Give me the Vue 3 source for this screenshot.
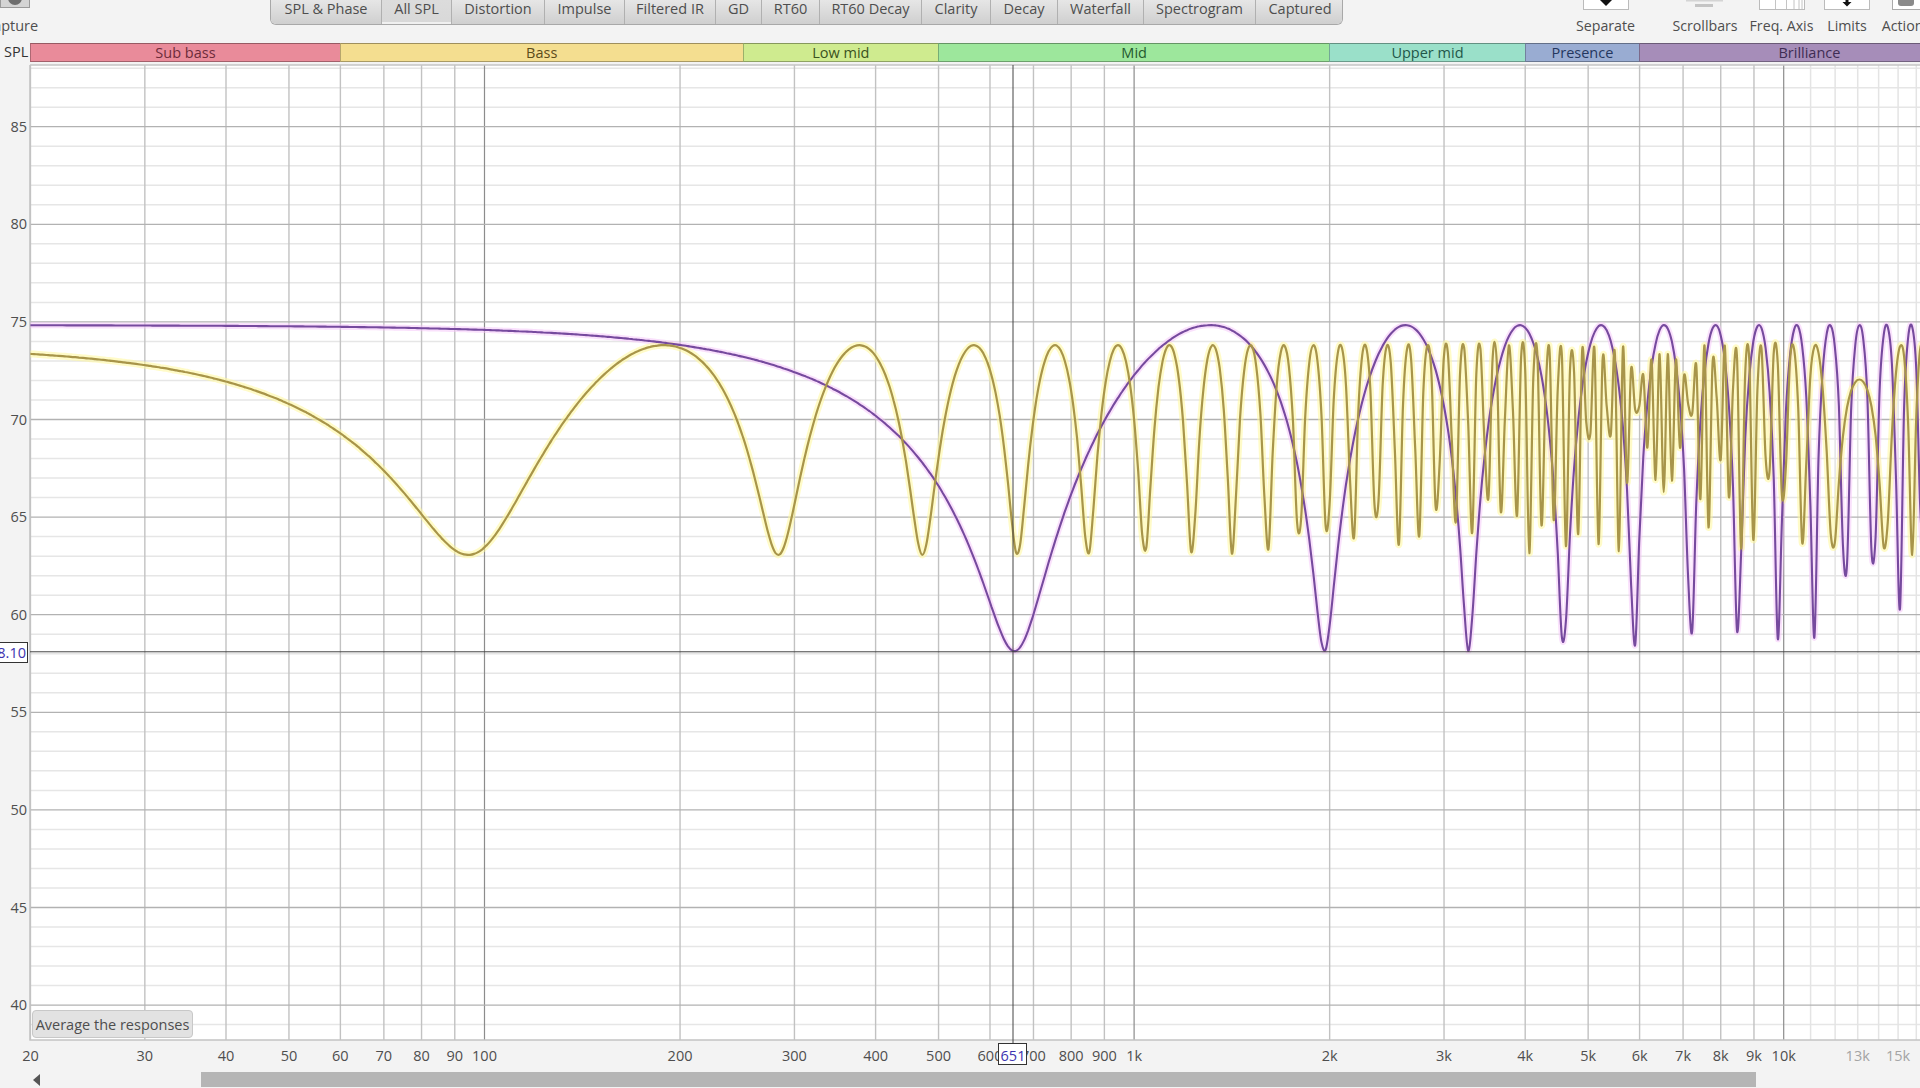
<script setup>
import { computed } from 'vue';

const tabs = ['SPL & Phase', 'All SPL', 'Distortion', 'Impulse', 'Filtered IR', 'GD', 'RT60', 'RT60 Decay', 'Clarity', 'Decay', 'Waterfall', 'Spectrogram', 'Captured'];

const plot = { left: 30, right: 1920, top: 65, bottom: 1040 };

// axis mapping measured from the gridlines
const xOf = (f) => 484.5 + 649.6 * Math.log10(f / 100);
const yOf = (db) => 126.7 + (85 - db) * 19.52;

const bands = [
  { name: 'Sub bass', from: 20, to: 60, bg: '#e98b9a', fg: '#6e2c3a' },
  { name: 'Bass', from: 60, to: 250, bg: '#f4de90', fg: '#5c4c1a' },
  { name: 'Low mid', from: 250, to: 500, bg: '#cfeb8f', fg: '#3a5220' },
  { name: 'Mid', from: 500, to: 2000, bg: '#9de79c', fg: '#245a2e' },
  { name: 'Upper mid', from: 2000, to: 4000, bg: '#9ae0c9', fg: '#22574a' },
  { name: 'Presence', from: 4000, to: 6000, bg: '#99acd2', fg: '#24375f' },
  { name: 'Brilliance', from: 6000, to: 20000, bg: '#a68db9', fg: '#3f2c54' }
];

const bandStyle = (b) => ({
  width: (xOf(b.to) - xOf(b.from)) + 'px',
  background: b.bg,
  color: b.fg
});

const xGrid = [];
[10, 100, 1000].forEach((d) => {
  for (let i = d === 10 ? 2 : 1; i < 10; i++) xGrid.push({ f: i * d, major: i === 1 });
});
xGrid.push({ f: 10000, major: true });
const fineX = [11000, 12000, 13000, 14000, 15000, 16000];

const xLabels = [
  [20, '20'], [30, '30'], [40, '40'], [50, '50'], [60, '60'], [70, '70'], [80, '80'], [90, '90'], [100, '100'],
  [200, '200'], [300, '300'], [400, '400'], [500, '500'], [600, '600'], [700, '700'], [800, '800'], [900, '900'], [1000, '1k'],
  [2000, '2k'], [3000, '3k'], [4000, '4k'], [5000, '5k'], [6000, '6k'], [7000, '7k'], [8000, '8k'], [9000, '9k'], [10000, '10k']
];

const yMajor = [85, 80, 75, 70, 65, 60, 55, 50, 45, 40];
const yMinor = [];
for (let db = 88; db >= 39; db--) {
  if (db % 5 !== 0) yMinor.push(db);
}

// comb filter response, sampled at 48 points per octave from 1 kHz like the measurement
const comb = (f, a, nullAt) => 70 + 10 * Math.log10(1 + a * a + 2 * a * Math.cos(Math.PI * f / nullAt));

function curvePath(a, nullAt) {
  const pts = [];
  const step = Math.pow(2, 1 / 48);
  let f = 1000;
  while (f > 20) f /= step;
  for (; f < 21000; f *= step) {
    const ff = Math.max(f, 20);
    pts.push([xOf(ff), yOf(comb(ff, a, nullAt))]);
  }
  let d = `M${pts[0][0].toFixed(1)} ${pts[0][1].toFixed(1)}`;
  for (let i = 0; i < pts.length - 1; i++) {
    const p0 = pts[Math.max(i - 1, 0)];
    const p1 = pts[i];
    const p2 = pts[i + 1];
    const p3 = pts[Math.min(i + 2, pts.length - 1)];
    const c1x = p1[0] + (p2[0] - p0[0]) / 6;
    const c1y = p1[1] + (p2[1] - p0[1]) / 6;
    const c2x = p2[0] - (p3[0] - p1[0]) / 6;
    const c2y = p2[1] - (p3[1] - p1[1]) / 6;
    d += `C${c1x.toFixed(1)} ${c1y.toFixed(1)} ${c2x.toFixed(1)} ${c2y.toFixed(1)} ${p2[0].toFixed(1)} ${p2[1].toFixed(1)}`;
  }
  return d;
}

const yellowPath = computed(() => curvePath(0.55, 94.438));
const purplePath = computed(() => curvePath(0.745, 654.45));

const framePath = `M${plot.left} ${plot.top}V${plot.bottom}H${plot.right}`;
const cursorX = xOf(651);
const cursorY = yOf(58.1);
</script>

<template>
  <div class="app">
    <header class="top">
      <div class="capture">
        <div class="capture-btn"><span class="capture-dot"></span></div>
        <span class="capture-label">Capture</span>
      </div>

      <nav class="tabs">
        <button v-for="t in tabs" :key="t" class="tab" :class="{ active: t === 'All SPL' }">{{ t }}</button>
      </nav>

      <div class="tools">
        <div class="tool">
          <svg class="tool-icon" width="46" height="10" viewBox="0 0 46 10">
            <rect x="0.5" y="-3" width="45" height="12.5" fill="#fff" stroke="#bbb" />
            <path d="M17 0h12l-6 6z" fill="#111" />
          </svg>
          <span>Separate</span>
        </div>
        <div class="tool">
          <svg class="tool-icon" width="46" height="10" viewBox="0 0 46 10">
            <rect x="4" y="0" width="37" height="1.5" fill="#d4d4d4" />
            <rect x="13" y="4" width="18" height="3" fill="#c4c4c4" />
          </svg>
          <span>Scrollbars</span>
        </div>
        <div class="tool">
          <svg class="tool-icon" width="46" height="10" viewBox="0 0 46 10">
            <rect x="0.5" y="-3" width="45" height="12.5" fill="#fff" stroke="#bbb" />
            <path d="M16.5 0v9M27.5 0v9M35 0v9M40 0v9M43 0v9" stroke="#c4c4c4" fill="none" />
          </svg>
          <span>Freq. Axis</span>
        </div>
        <div class="tool">
          <svg class="tool-icon" width="46" height="10" viewBox="0 0 46 10">
            <rect x="0.5" y="-3" width="45" height="12.5" fill="#fff" stroke="#bbb" />
            <path d="M21.5 0h3v2h3l-4.500 4.500L18.500 2h3z" fill="#111" />
          </svg>
          <span>Limits</span>
        </div>
        <div class="tool">
          <svg class="tool-icon" width="46" height="10" viewBox="0 0 46 10">
            <rect x="0.5" y="-3" width="45" height="12.5" fill="#fff" stroke="#aaa" />
            <rect x="6" y="-4" width="16" height="10" rx="3" fill="#8a8a8a" />
          </svg>
          <span>Actions</span>
        </div>
      </div>
    </header>

    <div class="band-row">
      <div class="spl">SPL</div>
      <div class="bands">
        <div v-for="b in bands" :key="b.name" class="band" :style="bandStyle(b)">{{ b.name }}</div>
      </div>
    </div>

    <div class="chart">
      <svg class="graph" width="1920" height="1006" viewBox="0 62 1920 1006">
        <rect :x="plot.left" :y="plot.top" :width="plot.right - plot.left" :height="plot.bottom - plot.top" fill="#fff" />

        <line v-for="db in yMinor" :key="'m' + db" :x1="plot.left" :x2="plot.right" :y1="yOf(db)" :y2="yOf(db)" class="h-minor" />
        <line v-for="f in fineX" :key="'fx' + f" :x1="xOf(f)" :x2="xOf(f)" :y1="plot.top" :y2="plot.bottom" class="v-fine" />
        <line v-for="g in xGrid" :key="'g' + g.f" :x1="xOf(g.f)" :x2="xOf(g.f)" :y1="plot.top" :y2="plot.bottom" :class="g.major ? 'v-major' : 'v-minor'" />
        <line v-for="db in yMajor" :key="'j' + db" :x1="plot.left" :x2="plot.right" :y1="yOf(db)" :y2="yOf(db)" class="h-major" />

        <path :d="framePath" class="frame" />
        <line :x1="plot.left" :x2="plot.right" :y1="plot.top" :y2="plot.top" class="frame" />

        <clipPath id="plot-clip">
          <rect :x="plot.left" :y="plot.top" :width="plot.right - plot.left" :height="plot.bottom - plot.top" />
        </clipPath>
        <g clip-path="url(#plot-clip)">
          <path :d="purplePath" class="halo-purple" />
          <path :d="yellowPath" class="halo-yellow" />
          <path :d="purplePath" class="curve-purple" />
          <path :d="yellowPath" class="curve-yellow" />
        </g>

        <line :x1="cursorX" :x2="cursorX" :y1="plot.top" y2="1043" class="cursor" />
        <line :x1="plot.left" :x2="plot.right" :y1="cursorY" :y2="cursorY" class="cursor" />

        <text v-for="db in yMajor" :key="'yl' + db" x="27" :y="yOf(db) + 5" class="axis" text-anchor="end">{{ db }}</text>
        <text v-for="l in xLabels" :key="'xl' + l[0]" :x="xOf(l[0])" y="1061" class="axis" text-anchor="middle">{{ l[1] }}</text>
        <text :x="xOf(13000)" y="1061" class="axis faint" text-anchor="middle">13k</text>
        <text :x="xOf(15000)" y="1061" class="axis faint" text-anchor="middle">15k</text>

        <rect x="998.5" y="1043.5" width="28" height="21" fill="#fff" stroke="#333" />
        <text :x="cursorX" y="1061" class="axis readout" text-anchor="middle">651</text>
        <rect x="-10" y="642.5" width="37.5" height="20" fill="#fff" stroke="#333" />
        <text x="26" y="657.5" class="axis readout" text-anchor="end">58.10</text>
      </svg>

      <button class="average">Average the responses</button>
    </div>

    <div class="scrollbar">
      <svg class="arrow" width="8" height="12" viewBox="0 0 8 12"><path d="M7 0v12L0 6z" fill="#555" /></svg>
      <div class="thumb"></div>
    </div>
  </div>
</template>

<style scoped>
.app {
  width: 1920px;
  height: 1088px;
  overflow: hidden;
  background: #f3f3f3;
  font-family: "Open Sans", "Noto Sans", sans-serif;
  display: flex;
  flex-direction: column;
}

.top {
  height: 43px;
  flex: none;
  display: flex;
  align-items: flex-start;
}

.capture {
  width: 270px;
  flex: none;
}

.capture-btn {
  width: 28px;
  height: 7px;
  background: #d4d4d4;
  border: 1px solid #9a9a9a;
  border-top: none;
  display: flex;
  justify-content: center;
  overflow: hidden;
}

.capture-dot {
  width: 14px;
  height: 14px;
  border-radius: 50%;
  background: #6e6e6e;
  margin-top: -9px;
}

.capture-label {
  display: block;
  margin: 9px 0 0 -16px;
  font-size: 14.5px;
  line-height: 18px;
  color: #4e4e4e;
}

.tabs {
  width: 1073px;
  height: 25px;
  flex: none;
  display: grid;
  grid-template-columns: 111px 70px 93px 80px 91px 46px 58px 102px 69px 67px 86px 112px 88px;
  border: 1px solid #a8a8a8;
  border-top: none;
  border-radius: 0 0 6px 6px;
  overflow: hidden;
  box-sizing: border-box;
}

.tab {
  border: none;
  border-right: 1px solid #b0b0b0;
  padding: 0 0 6px;
  background: linear-gradient(#e6e6e6, #cfcfcf);
  font-family: inherit;
  font-size: 14.5px;
  line-height: 18px;
  color: #4e4e4e;
  white-space: nowrap;
}

.tab:last-child {
  border-right: none;
}

.tab.active {
  background: linear-gradient(#dcdcdc, #d8d8d8);
  box-shadow: inset 0 -2px 0 #f0f0f0;
}

.tools {
  margin-left: 213px;
  flex: none;
  display: grid;
  grid-template-columns: 99px 100px 53px 78px 40px;
}

.tool {
  display: flex;
  flex-direction: column;
  align-items: center;
  font-size: 14.2px;
  line-height: 18px;
  color: #4e4e4e;
  white-space: nowrap;
}

.tool-icon {
  display: block;
  margin-bottom: 7px;
}

.tool:last-child .tool-icon {
  margin-left: 18px;
}

.band-row {
  height: 19px;
  flex: none;
  display: flex;
}

.spl {
  width: 30px;
  flex: none;
  padding-left: 4px;
  box-sizing: border-box;
  font-size: 14.5px;
  line-height: 18px;
  color: #333;
}

.bands {
  display: flex;
  height: 19px;
}

.band {
  flex: none;
  box-sizing: border-box;
  border-top: 1px solid rgba(0, 0, 0, 0.35);
  border-bottom: 1px solid rgba(0, 0, 0, 0.3);
  border-left: 1px solid rgba(0, 0, 0, 0.25);
  text-align: center;
  font-size: 14.5px;
  line-height: 17px;
  white-space: nowrap;
  overflow: hidden;
}

.chart {
  position: relative;
  height: 1006px;
  flex: none;
}

.graph {
  display: block;
}

.h-minor {
  stroke: #e6e6e6;
  stroke-width: 1.5;
}

.h-major {
  stroke: #b2b2b2;
  stroke-width: 1.3;
}

.v-minor {
  stroke: #c2c2c2;
  stroke-width: 1.4;
}

.v-major {
  stroke: #8c8c8c;
  stroke-width: 1.2;
}

.v-fine {
  stroke: #e4e4e4;
  stroke-width: 1.5;
}

.frame {
  fill: none;
  stroke: #c4c4c4;
  stroke-width: 1.5;
}

.halo-yellow,
.halo-purple,
.curve-yellow,
.curve-purple {
  fill: none;
  stroke-linejoin: round;
}

.halo-yellow {
  stroke: #fff79a;
  stroke-width: 7;
  opacity: 0.55;
}

.halo-purple {
  stroke: #f6c4fa;
  stroke-width: 6;
  opacity: 0.5;
}

.curve-yellow {
  stroke: #a8954a;
  stroke-width: 2.2;
}

.curve-purple {
  stroke: #764a9e;
  stroke-width: 2.1;
}

.cursor {
  stroke: #444;
  stroke-width: 1;
}

.axis {
  font-size: 14.5px;
  fill: #4e4e4e;
}

.faint {
  fill: #a4a4a4;
}

.readout {
  fill: #3d33b0;
}

.average {
  position: absolute;
  left: 32px;
  top: 948px;
  width: 161px;
  height: 28px;
  padding: 0;
  box-sizing: border-box;
  background: #e2e2e2;
  border: 1px solid #c8c8c8;
  border-radius: 4px;
  font-family: inherit;
  font-size: 14.5px;
  color: #4e4e4e;
  white-space: nowrap;
}

.scrollbar {
  flex: 1;
  display: flex;
  align-items: flex-start;
  padding-top: 4px;
  box-sizing: border-box;
}

.arrow {
  margin: 2px 0 0 33px;
  flex: none;
}

.thumb {
  width: 1555px;
  height: 15px;
  margin-left: 160px;
  background: #b5b5b5;
}
</style>
